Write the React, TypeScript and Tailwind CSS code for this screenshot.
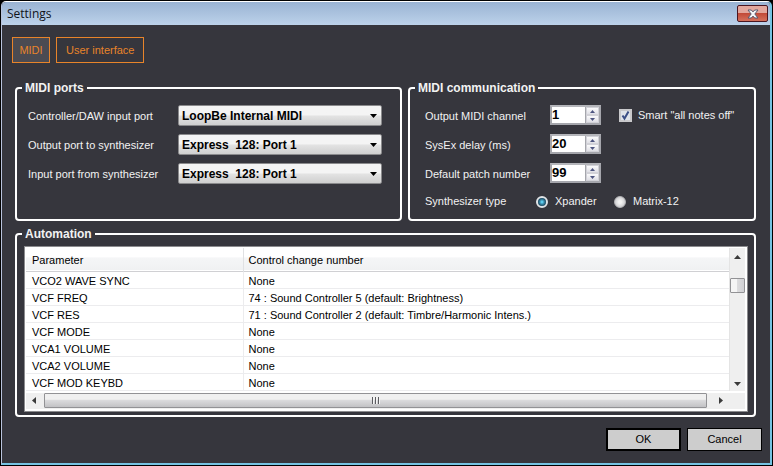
import { useState, type ReactNode } from "react";

const portFields = [
  { id: "controller-port", label: "Controller/DAW input port", value: "LoopBe Internal MIDI" },
  { id: "output-port", label: "Output port to synthesizer", value: "Express\u00a0 128: Port 1" },
  { id: "input-port", label: "Input port from synthesizer", value: "Express\u00a0 128: Port 1" },
];

const automation = [
  ["VCO2 WAVE SYNC", "None"],
  ["VCF FREQ", "74 : Sound Controller 5 (default: Brightness)"],
  ["VCF RES", "71 : Sound Controller 2 (default: Timbre/Harmonic Intens.)"],
  ["VCF MODE", "None"],
  ["VCA1 VOLUME", "None"],
  ["VCA2 VOLUME", "None"],
  ["VCF MOD KEYBD", "None"],
];

function Group({ title, className, children }: { title: string; className: string; children: ReactNode }) {
  return (
    <fieldset className={`min-w-0 rounded-[4px] border-2 border-white ${className}`}>
      <legend className="px-[3px] text-xs leading-4 font-bold">{title}</legend>
      {children}
    </fieldset>
  );
}

function Triangle({ dir, className }: { dir: "up" | "down" | "left" | "right"; className: string }) {
  const paths = {
    up: "M0 4 L3.5 0 L7 4Z",
    down: "M0 0 H7 L3.5 4Z",
    left: "M4 0 V7 L0 3.5Z",
    right: "M0 0 V7 L4 3.5Z",
  };
  const tall = dir === "left" || dir === "right";
  return (
    <svg
      aria-hidden="true"
      width={tall ? 4 : 7}
      height={tall ? 7 : 4}
      viewBox={tall ? "0 0 4 7" : "0 0 7 4"}
      className={className}
    >
      <path d={paths[dir]} fill="currentColor" />
    </svg>
  );
}

function PortSelect({ id, label, value }: { id: string; label: string; value: string }) {
  return (
    <div className="flex items-center">
      <label htmlFor={id} className="w-[150px] shrink-0 pt-[2px]">
        {label}
      </label>
      <div className="relative min-w-0 flex-1">
        <select
          id={id}
          className="block h-[21px] w-full appearance-none rounded-[2px] border border-[#8a8a8c] bg-linear-to-b from-[#f4f4f4] from-45% via-[#e2e2e2] via-55% to-[#cfcfcf] pr-5 pl-[3px] text-xs leading-4 font-bold text-black"
        >
          <option>{value}</option>
        </select>
        <Triangle dir="down" className="pointer-events-none absolute top-[9px] right-[5px] text-black" />
      </div>
    </div>
  );
}

function NumberRow({ id, label, initial, children }: { id: string; label: string; initial: number; children?: ReactNode }) {
  const [value, setValue] = useState(initial);
  const step =
    "flex h-2 w-full items-center justify-center border border-[#d2d2d8] bg-linear-to-b from-[#fbfbfc] to-[#e0e0e6]";
  return (
    <div className="flex items-center">
      <label htmlFor={id} className="w-[125px] shrink-0 pt-[2px]">
        {label}
      </label>
      <div className="flex h-5 w-[51px] shrink-0 border-2 border-[#a5a6ac] border-t-[#b4b5ba] bg-white">
        <input
          id={id}
          inputMode="numeric"
          value={value}
          onChange={(e) => setValue(Number(e.target.value) || 0)}
          className="h-[15px] w-[33px] text-[13px] leading-[15px] font-bold text-black outline-none"
        />
        <div className="flex w-[14px] flex-col border-l border-[#a5a6ac] bg-[#a5a6ac]">
          <button type="button" aria-label={`Increase ${label}`} onClick={() => setValue(value + 1)} className={step}>
            <Triangle dir="up" className="h-[3px] w-[5px] text-[#4d5580]" />
          </button>
          <button type="button" aria-label={`Decrease ${label}`} onClick={() => setValue(value - 1)} className={step}>
            <Triangle dir="down" className="h-[3px] w-[5px] text-[#4d5580]" />
          </button>
        </div>
      </div>
      {children}
    </div>
  );
}

function Radio({ label, checked, onSelect }: { label: string; checked: boolean; onSelect: () => void }) {
  return (
    <label className="flex w-[78px] items-center gap-[7px] whitespace-nowrap">
      <input
        type="radio"
        name="synth-type"
        checked={checked}
        onChange={onSelect}
        className="size-3 shrink-0 appearance-none rounded-full border border-[#b5b5b8] bg-radial from-[#f2f2f2] from-20% to-[#bcbcc0] checked:border-2 checked:border-[#dfe3e6] checked:from-[#5fd0f2] checked:from-10% checked:to-[#123a52] checked:to-75%"
      />
      {label}
    </label>
  );
}

export default function App() {
  const [synth, setSynth] = useState("Xpander");
  const [tab, setTab] = useState("MIDI");
  return (
    <div className="flex min-h-screen flex-col bg-black p-px font-['Liberation_Sans',Arial,sans-serif] text-[11px] leading-[13px] text-[#f2f2f2]">
      <div className="flex flex-1 flex-col overflow-hidden rounded-t-[5px] border border-r-2 border-b-2 border-[#74c3e2] border-t-white border-l-[#b9c3dc] bg-[#36363d]">
        <header className="flex h-[23px] items-center justify-between bg-linear-to-b from-[#9ab3d3] to-[#bcd2ea] pr-[2px] pl-[5px]">
          <h1 className="font-['Open_Sans','Noto_Sans',sans-serif] text-xs leading-4 text-[#10131a]">Settings</h1>
          <button
            type="button"
            aria-label="Close"
            className="flex h-[17px] w-[31px] items-center justify-center rounded-[2px] border border-[#4a1621] bg-linear-to-b from-[#e3a79d] from-45% via-[#c24a38] via-50% to-[#d4705c]"
          >
            <svg aria-hidden="true" width="12" height="10" viewBox="0 0 12 10">
              <path
                d="M1 1H4.3L6 2.9L7.7 1H11L7.8 5L11 9H7.7L6 7.1L4.3 9H1L4.2 5Z"
                fill="#f6f6f8"
                stroke="#565a70"
                strokeWidth="1"
              />
            </svg>
          </button>
        </header>

        <main className="flex flex-1 flex-col pt-3 pr-2 pb-3 pl-[10px]">
          <nav className="flex gap-[6px]">
            {["MIDI", "User interface"].map((name) => (
              <button
                key={name}
                type="button"
                onClick={() => setTab(name)}
                className={`h-[26px] min-w-[38px] border border-[#e8842a] ${
                  tab === name ? "bg-[#4b4b52] px-[6px]" : "px-[9px]"
                } text-[#e8842a]`}
              >
                {name}
              </button>
            ))}
          </nav>

          <div className="mt-[17px] mr-[6px] ml-[3px] flex flex-col gap-[5px]">
            <div className="grid grid-cols-[387fr_348fr] gap-[6px]">
              <Group title="MIDI ports" className="pr-[18px] pl-[5px]">
                <div className="flex flex-col gap-2 pt-[9px] pl-[6px]">
                  {portFields.map((f) => (
                    <PortSelect key={f.id} {...f} />
                  ))}
                </div>
              </Group>

              <Group title="MIDI communication" className="pr-2 pb-2 pl-[5px]">
                <div className="flex flex-col gap-[9px] pt-[9px] pl-[10px]">
                  <NumberRow id="channel" label="Output MIDI channel" initial={1}>
                    <label className="ml-[18px] flex items-center gap-[6px] whitespace-nowrap">
                      <span className="relative flex">
                        <input
                          type="checkbox"
                          defaultChecked
                          className="peer size-[13px] appearance-none border-2 border-[#c9c9cc] bg-[#dfe3ea]"
                        />
                        <svg
                          aria-hidden="true"
                          width="13"
                          height="13"
                          viewBox="0 0 13 13"
                          className="pointer-events-none absolute inset-0 hidden peer-checked:block"
                        >
                          <path d="M3.5 6.5L5.5 9.5L9.5 2.5" fill="none" stroke="#3b4f86" strokeWidth="2" />
                        </svg>
                      </span>
                      Smart "all notes off"
                    </label>
                  </NumberRow>
                  <NumberRow id="sysex-delay" label="SysEx delay (ms)" initial={20} />
                  <NumberRow id="patch-number" label="Default patch number" initial={99} />
                  <div role="radiogroup" aria-labelledby="synth-type" className="flex h-[19px] items-center">
                    <span id="synth-type" className="w-[111px] shrink-0">
                      Synthesizer type
                    </span>
                    {["Xpander", "Matrix-12"].map((name) => (
                      <Radio key={name} label={name} checked={synth === name} onSelect={() => setSynth(name)} />
                    ))}
                  </div>
                </div>
              </Group>
            </div>

            <Group title="Automation" className="pr-[6px] pb-[3px] pl-[5px]">
              <div className="mt-1 ml-[2px] border border-[#8b8b8e] bg-white p-px pr-[2px] pb-[2px] text-black">
                <div className="flex">
                  <table className="min-w-0 flex-1 table-fixed border-collapse text-left">
                    <thead>
                      <tr className="h-[23px] border-b border-[#d0d0d3] bg-linear-to-b from-white from-40% via-[#f5f6f7] via-45% to-[#f0f1f2]">
                        <th scope="col" className="w-[217px] border-r border-[#e0e1e3] pt-[3px] pl-[6px] font-normal">
                          Parameter
                        </th>
                        <th scope="col" className="pt-[3px] pl-[5px] font-normal">
                          Control change number
                        </th>
                      </tr>
                    </thead>
                    <tbody>
                      {automation.map(([name, cc]) => (
                        <tr key={name} className="h-[17px] border-b border-[#ececee]">
                          <td className="border-r border-[#ececee] pt-[3px] pl-[6px]">{name}</td>
                          <td className="pt-[3px] pl-[5px]">{cc}</td>
                        </tr>
                      ))}
                    </tbody>
                  </table>
                  <div className="flex w-4 flex-col items-center border-l border-[#e4e4e4] bg-[#efefef] pt-[7px] pb-[5px]">
                    <Triangle dir="up" className="text-[#3a3a3a]" />
                    <div className="mt-[19px] h-[15px] w-[15px] rounded-[1px] border border-[#929295] bg-linear-to-r from-[#f5f5f5] from-45% via-[#dcdcde] via-50% to-[#d0d0d3]" />
                    <Triangle dir="down" className="mt-auto text-[#3a3a3a]" />
                  </div>
                </div>
                <div className="mt-[2px] flex h-4 items-center bg-[#efefef] pr-[22px] pl-[6px]">
                  <Triangle dir="left" className="text-[#3a3a3a]" />
                  <div className="mr-3 ml-2 flex h-[15px] flex-1 items-center justify-center gap-px rounded-[1px] border border-[#929295] bg-linear-to-b from-[#f0f0f0] from-40% via-[#dadadc] via-50% to-[#c2c2c5]">
                    {[0, 1, 2].map((n) => (
                      <span key={n} className="h-[7px] w-[2px] border-r border-[#f4f4f4] bg-[#5c5c60]" />
                    ))}
                  </div>
                  <Triangle dir="right" className="text-[#3a3a3a]" />
                </div>
              </div>
            </Group>
          </div>

          <footer className="mt-[11px] flex justify-end gap-[6px] text-black">
            <button type="submit" className="h-[23px] w-[75px] border-2 border-black bg-[#cdcdcd]">
              OK
            </button>
            <button type="button" className="h-[23px] w-[75px] border border-black bg-[#cdcdcd]">
              Cancel
            </button>
          </footer>
        </main>
      </div>
    </div>
  );
}
